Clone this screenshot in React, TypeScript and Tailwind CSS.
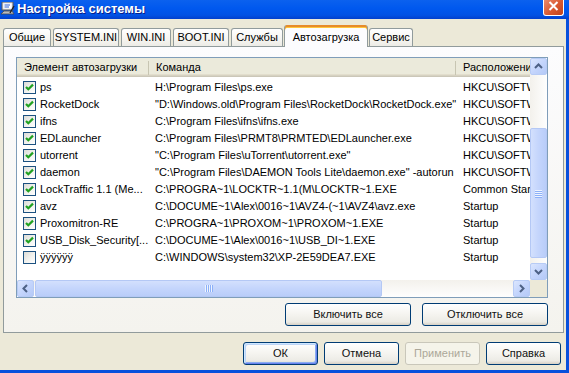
import clsx from 'clsx';

type Row = { name: string; cmd: string; loc: string; on: boolean };

const RUN = 'HKCU\\SOFTW';

const rows: Row[] = [
  { name: 'ps', cmd: 'H:\\Program Files\\ps.exe', loc: RUN, on: true },
  { name: 'RocketDock', cmd: '"D:\\Windows.old\\Program Files\\RocketDock\\RocketDock.exe"', loc: RUN, on: true },
  { name: 'ifns', cmd: 'C:\\Program Files\\ifns\\ifns.exe', loc: RUN, on: true },
  { name: 'EDLauncher', cmd: 'C:\\Program Files\\PRMT8\\PRMTED\\EDLauncher.exe', loc: RUN, on: true },
  { name: 'utorrent', cmd: '"C:\\Program Files\\uTorrent\\utorrent.exe"', loc: RUN, on: true },
  { name: 'daemon', cmd: '"C:\\Program Files\\DAEMON Tools Lite\\daemon.exe" -autorun', loc: RUN, on: true },
  { name: 'LockTraffic 1.1 (Me...', cmd: 'C:\\PROGRA~1\\LOCKTR~1.1(M\\LOCKTR~1.EXE', loc: 'Common Start', on: true },
  { name: 'avz', cmd: 'C:\\DOCUME~1\\Alex\\0016~1\\AVZ4-(~1\\AVZ4\\avz.exe', loc: 'Startup', on: true },
  { name: 'Proxomitron-RE', cmd: 'C:\\PROGRA~1\\PROXOM~1\\PROXOM~1.EXE', loc: 'Startup', on: true },
  { name: 'USB_Disk_Security[...', cmd: 'C:\\DOCUME~1\\Alex\\0016~1\\USB_DI~1.EXE', loc: 'Startup', on: true },
  { name: 'ÿÿÿÿÿÿ', cmd: 'C:\\WINDOWS\\system32\\XP-2E59DEA7.EXE', loc: 'Startup', on: false },
];

const tabs = [
  { label: 'Общие', cls: 'w-[48px] mr-[2px]' },
  { label: 'SYSTEM.INI', cls: 'w-[66px] mr-[2px]' },
  { label: 'WIN.INI', cls: 'w-[50px] mr-[2px]' },
  { label: 'BOOT.INI', cls: 'w-[56px] mr-[2px]' },
  { label: 'Службы', cls: 'w-[52px] mr-[1px]' },
  { label: 'Автозагрузка', cls: 'w-[84px] mr-[1px]', active: true },
  { label: 'Сервис', cls: 'w-[44px]' },
];

function Check({ on }: { on: boolean }) {
  return (
    <div className="h-[13px] w-[13px] shrink-0 border border-[#1c5180] bg-[linear-gradient(135deg,#dcdcd7_0%,#f2f2ef_55%,#ffffff_100%)]">
      {on && (
        <svg width="11" height="11" viewBox="0 0 11 11">
          <path d="M2 5 L4.3 7.3 L9 2.6" fill="none" stroke="#21a121" strokeWidth="2.2" />
        </svg>
      )}
    </div>
  );
}

function Arrow({ dir }: { dir: 'up' | 'down' | 'left' | 'right' }) {
  const d = {
    up: 'M5 10 L8.5 6.5 L12 10',
    down: 'M5 7 L8.5 10.5 L12 7',
    left: 'M10 5 L6.5 8.5 L10 12',
    right: 'M7 5 L10.5 8.5 L7 12',
  }[dir];
  return (
    <div className="h-[17px] w-[17px] shrink-0 rounded-[2px] border border-[#b7cbf5] bg-[linear-gradient(135deg,#dbe6fe_0%,#c4d5fc_50%,#b4c9f7_100%)]">
      <svg width="15" height="15" viewBox="1 1 15 15">
        <path d={d} fill="none" stroke="#4d6185" strokeWidth="2" />
      </svg>
    </div>
  );
}

function Btn({ children, cls, def, disabled }: { children: string; cls: string; def?: boolean; disabled?: boolean }) {
  return (
    <div
      className={clsx(
        'flex h-[23px] items-center justify-center rounded-[3px] border text-[11px] font-normal',
        disabled
          ? 'border-[#c9c7ba] bg-[#f5f4ea] text-[#aca899]'
          : 'border-[#003c74] bg-[linear-gradient(180deg,#ffffff_0%,#f6f5f1_45%,#ecebe5_85%,#d6d0c5_100%)] text-[#111]',
        def && 'shadow-[inset_1px_1px_0_#cee7ff,inset_-1px_-1px_0_#6982ee,inset_2px_2px_0_#bcd4f6,inset_-2px_-2px_0_#89adf0]',
        cls,
      )}
    >
      {children}
    </div>
  );
}

export default function App() {
  return (
    <div className="flex h-[373px] w-[569px] flex-col overflow-hidden font-['Liberation_Sans',Arial,sans-serif] text-[11px] text-black">
      {/* title bar */}
      <div className="flex h-[19px] shrink-0 items-start justify-between bg-[linear-gradient(180deg,#0b61ee_0%,#0058ee_45%,#0252e4_80%,#0340cc_100%)] pr-[5px]">
        <div className="flex h-[17px] items-center gap-[2px] pl-[1px]">
          <svg width="14" height="13" viewBox="0 0 14 13">
            <rect x="1" y="0" width="11" height="8" fill="#dfe3ea" stroke="#5a5a5a" strokeWidth="1" />
            <rect x="2.5" y="1.5" width="8" height="5" fill="#ffffff" />
            <path d="M3.5 3 H9 M3.5 5 H8" stroke="#2b5fd6" strokeWidth="1" />
            <path d="M0 12 L3 9 H11 L13 12 Z" fill="#b9bcc2" stroke="#4a4a4a" strokeWidth="0.8" />
            <path d="M9 11 L13 4" stroke="#222" strokeWidth="1.4" />
          </svg>
          <span className="text-[13px] font-bold text-white [text-shadow:1px_1px_0_#0a1f8a]">Настройка системы</span>
        </div>
        <div className="h-[16px] w-[21px] rounded-b-[3px] border border-t-0 border-white bg-[linear-gradient(135deg,#ea8a6c_0%,#d9582f_55%,#c2431b_100%)]">
          <svg width="19" height="15" viewBox="0 0 19 15">
            <path d="M5.5 2 L13.5 10 M13.5 2 L5.5 10" stroke="#ffffff" strokeWidth="2" />
          </svg>
        </div>
      </div>

      {/* body */}
      <div className="flex flex-1 flex-col border-r-[3px] border-b-[3px] border-[#0850dc] bg-[#ece9d8]">
        {/* tabs */}
        <div className="mt-[6px] ml-[3px] flex h-[21px] items-end">
          {tabs.map((t) =>
            t.active ? (
              <div
                key={t.label}
                className={clsx(
                  'relative z-10 -mb-[1px] flex h-[22px] items-start justify-center rounded-t-[3px] border-x border-[#919b9c] bg-[#fcfcfe] pt-[4px] shadow-[inset_0_2px_0_#e68b2c,inset_0_3px_0_#ffc73c]',
                  t.cls,
                )}
              >
                {t.label}
              </div>
            ) : (
              <div
                key={t.label}
                className={clsx(
                  'flex h-[18px] items-center justify-center rounded-t-[3px] border border-b-0 border-[#919b9c] bg-[linear-gradient(180deg,#ffffff_0%,#f6f5f1_60%,#ecebe6_100%)]',
                  t.cls,
                )}
              >
                {t.label}
              </div>
            ),
          )}
        </div>

        {/* tab page */}
        <div className="ml-[3px] flex h-[287px] w-[561px] flex-col border border-[#919b9c] bg-[linear-gradient(180deg,#fcfcfe_0%,#f4f3ee_100%)] pt-[10px] pl-[12px]">
          {/* list view */}
          <div className="grid h-[241px] w-[532px] grid-cols-[513px_17px] grid-rows-[222px_17px] border border-[#7f9db9] bg-white">
            <div className="flex flex-col overflow-hidden">
              <div className="flex h-[19px] shrink-0 items-center bg-[#ebeadb] shadow-[inset_0_-1px_0_#cbc7b8,inset_0_-2px_0_#d6d2c2,inset_0_-3px_0_#e2decd]">
                <div className="w-[131px] shrink-0 pl-[7px] pb-[1px] whitespace-nowrap">Элемент автозагрузки</div>
                <div className="h-[14px] w-[1px] shrink-0 bg-[#c7c5b2]" />
                <div className="w-[306px] shrink-0 pl-[7px] pb-[1px] whitespace-nowrap">Команда</div>
                <div className="h-[14px] w-[1px] shrink-0 bg-[#c7c5b2]" />
                <div className="min-w-0 flex-1 overflow-hidden pl-[7px] pb-[1px] whitespace-nowrap">Расположени</div>
              </div>
              <div className="mt-[2px] flex flex-col">
                {rows.map((r) => (
                  <div key={r.cmd} className="flex h-[17px] items-center whitespace-nowrap">
                    <div className="flex w-[131px] shrink-0 items-center gap-[4px] pl-[6px]">
                      <Check on={r.on} />
                      <span>{r.name}</span>
                    </div>
                    <div className="w-[307px] shrink-0 pl-[7px]">{r.cmd}</div>
                    <div className="min-w-0 flex-1 overflow-hidden pl-[8px]">{r.loc}</div>
                  </div>
                ))}
              </div>
            </div>

            {/* vertical scrollbar */}
            <div className="flex flex-col bg-[linear-gradient(90deg,#f3f1ec_0%,#fefefe_100%)]">
              <Arrow dir="up" />
              <div className="h-[53px] shrink-0" />
              <div className="flex h-[130px] shrink-0 flex-col items-center justify-center gap-[1px] rounded-[2px] border border-[#b4c8f5] bg-[linear-gradient(90deg,#d3e0fd_0%,#c4d5fc_50%,#b9cdf9_100%)]">
                {[0, 1, 2, 3].map((i) => (
                  <div key={i} className="h-[1px] w-[7px] bg-[#eef4fe] shadow-[0_1px_0_#8cb0f8]" />
                ))}
              </div>
              <div className="flex-1" />
              <Arrow dir="down" />
            </div>

            {/* horizontal scrollbar */}
            <div className="flex bg-[linear-gradient(180deg,#f3f1ec_0%,#fefefe_100%)]">
              <Arrow dir="left" />
              <div className="ml-[1px] flex h-[17px] w-[347px] shrink-0 items-center justify-center gap-[1px] rounded-[2px] border border-[#b4c8f5] bg-[linear-gradient(180deg,#d3e0fd_0%,#c4d5fc_50%,#b9cdf9_100%)]">
                {[0, 1, 2, 3].map((i) => (
                  <div key={i} className="h-[7px] w-[1px] bg-[#eef4fe] shadow-[1px_0_0_#8cb0f8]" />
                ))}
              </div>
              <div className="flex-1" />
              <Arrow dir="right" />
            </div>
            <div className="bg-[#ece9d8]" />
          </div>

          <div className="mt-[5px] flex w-[532px] justify-end gap-[11px]">
            <Btn cls="w-[126px]">Включить все</Btn>
            <Btn cls="w-[126px]">Отключить все</Btn>
          </div>
        </div>

        {/* dialog buttons */}
        <div className="mt-[9px] flex justify-end gap-[6px] pr-[5px]">
          <Btn cls="w-[75px]" def>
            ОК
          </Btn>
          <Btn cls="w-[75px]">Отмена</Btn>
          <Btn cls="w-[75px]" disabled>
            Применить
          </Btn>
          <Btn cls="w-[75px]">Справка</Btn>
        </div>
      </div>
    </div>
  );
}
